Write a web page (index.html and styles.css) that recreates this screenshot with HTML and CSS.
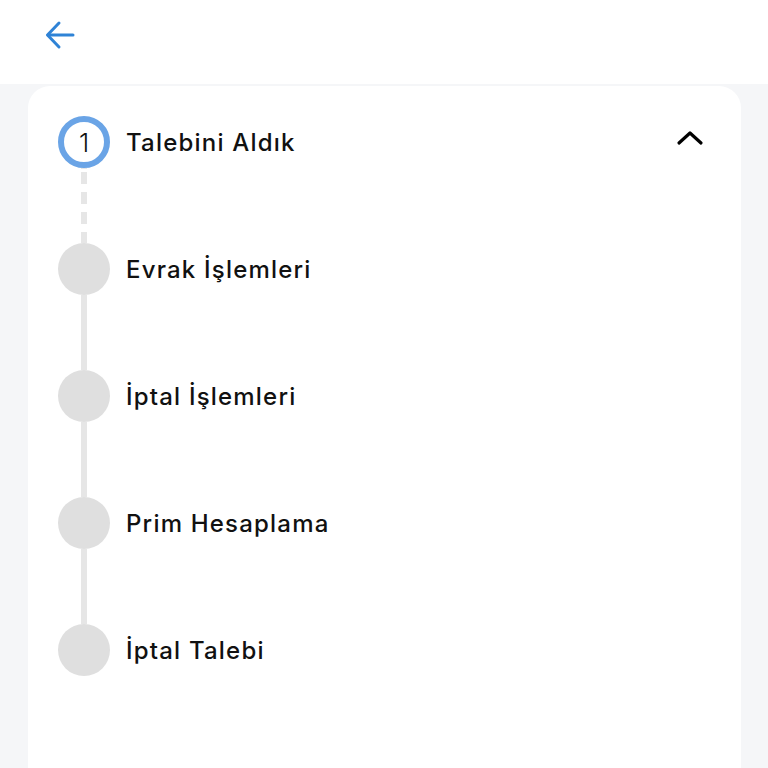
FILE: index.html
```html
<!DOCTYPE html>
<html lang="tr">
<head>
    <meta charset="UTF-8">
    <meta name="viewport" content="width=device-width, initial-scale=1.0">
    <title>Talep Durumu</title>
    <link rel="stylesheet" href="styles.css">
</head>
<body>
    <header class="topbar">
        <button class="back-btn" aria-label="Geri">
            <svg width="34" height="34" viewBox="0 0 34 34" fill="none" stroke="#2f83d6" stroke-width="3" stroke-linecap="round" stroke-linejoin="round">
                <path d="M30 17H5"/>
                <path d="M16 5L4.5 17L16 29"/>
            </svg>
        </button>
    </header>

    <main class="content">
        <section class="card">
            <div class="step active">
                <div class="marker"><span class="dot">1</span></div>
                <div class="label">Talebini Aldık</div>
                <svg class="chevron" width="30" height="18" viewBox="0 0 30 18" fill="none" stroke="#000" stroke-width="3.2" stroke-linecap="round" stroke-linejoin="round">
                    <path d="M4 14L15 4L26 14"/>
                </svg>
            </div>
            <div class="step">
                <div class="marker"><span class="dot"></span></div>
                <div class="label">Evrak İşlemleri</div>
            </div>
            <div class="step">
                <div class="marker"><span class="dot"></span></div>
                <div class="label">İptal İşlemleri</div>
            </div>
            <div class="step">
                <div class="marker"><span class="dot"></span></div>
                <div class="label">Prim Hesaplama</div>
            </div>
            <div class="step last">
                <div class="marker"><span class="dot"></span></div>
                <div class="label">İptal Talebi</div>
            </div>
        </section>
    </main>
</body>
</html>
```

FILE: styles.css
```css
body {
    margin: 0;
    font-family: Inter, "Noto Sans", Arial, sans-serif;
    background-color: #f5f6f8;
    color: #111;
    height: 768px;
    overflow: hidden;
}

.topbar {
    height: 84px;
    background: #fff;
    display: flex;
    align-items: flex-start;
}

.back-btn {
    margin: 18px 0 0 43px;
    padding: 0;
    border: none;
    background: none;
    width: 34px;
    height: 34px;
    cursor: pointer;
}

.content {
    padding: 2px 27px 0 28px;
}

.card {
    background: #fff;
    border-radius: 22px 22px 0 0;
    height: 700px;
    padding: 30px 0 0 30px;
    box-sizing: border-box;
}

.step {
    display: flex;
    align-items: flex-start;
    height: 127px;
    position: relative;
}

.marker {
    width: 52px;
    display: flex;
    flex-direction: column;
    align-items: center;
    height: 100%;
}

.marker::after {
    content: "";
    width: 6px;
    flex: 1;
    background: #e6e6e6;
}

.step.active .marker::after {
    background: repeating-linear-gradient(to bottom, #e6e6e6 0 12px, transparent 12px 20px);
    background-position: 0 4px;
}

.step.last .marker::after {
    display: none;
}

.dot {
    width: 52px;
    height: 52px;
    border-radius: 50%;
    background: #dfdfdf;
    box-sizing: border-box;
    display: flex;
    align-items: center;
    justify-content: center;
    font-size: 26px;
    font-weight: 300;
    color: #111;
    flex-shrink: 0;
}

.step.active .dot {
    background: #fff;
    border: 6px solid #6aa4e6;
}

.label {
    margin-left: 16px;
    font-size: 24px;
    font-weight: 500;
    line-height: 54px;
    letter-spacing: 1.2px;
    flex: 1;
}

.chevron {
    margin: 13px 36px 0 0;
}
```
